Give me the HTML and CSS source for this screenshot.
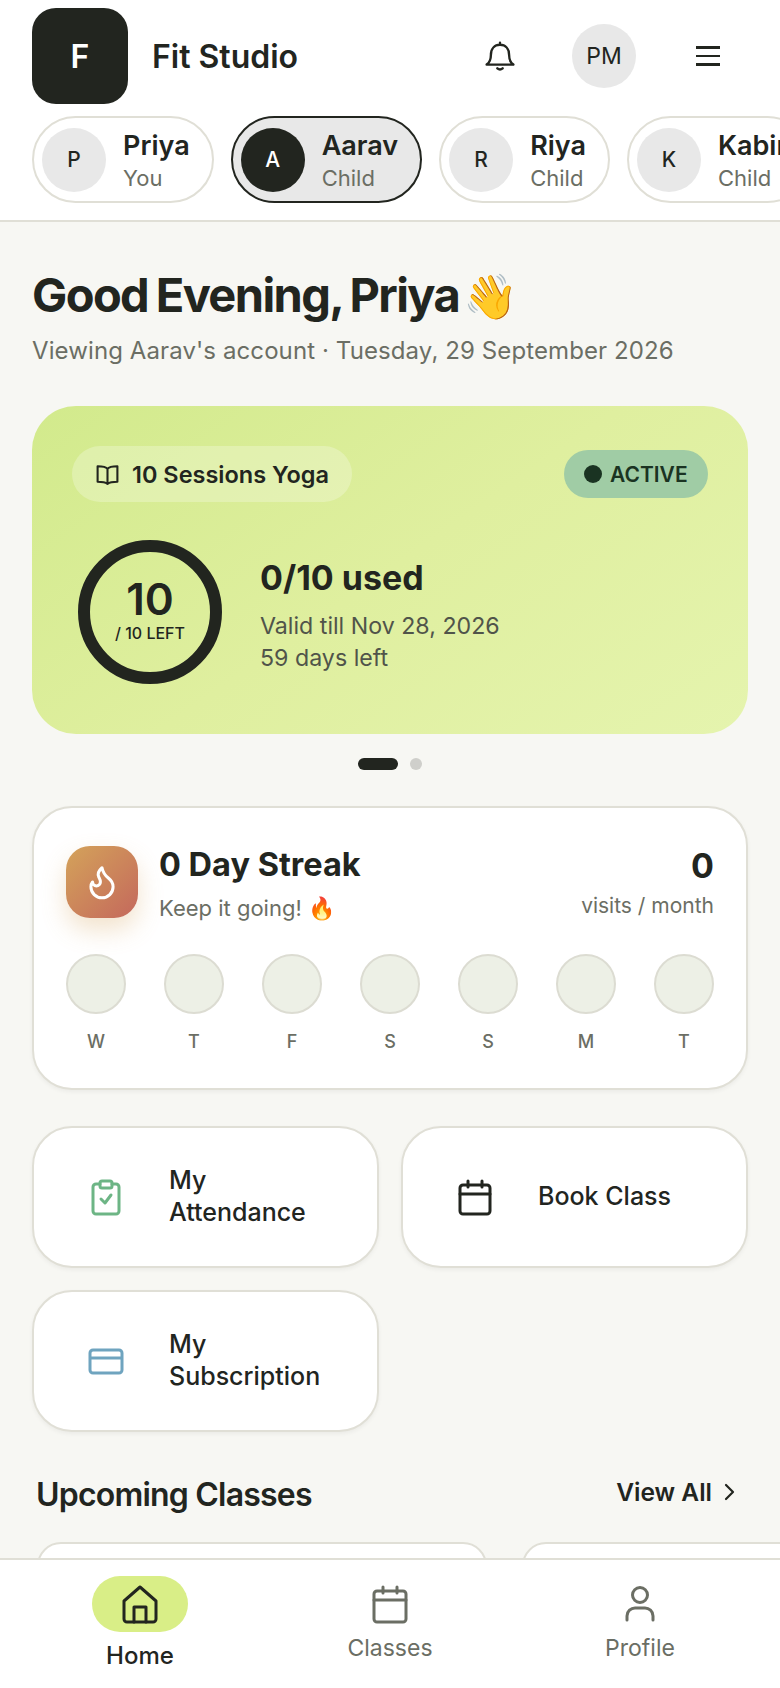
FILE: index.html
```html
<!DOCTYPE html>
<html lang="en">
<head>
  <meta charset="UTF-8">
  <meta name="viewport" content="width=device-width, initial-scale=1.0">
  <title>Fit Studio</title>
  <link rel="stylesheet" href="styles.css">
</head>
<body>
  <header class="topbar">
    <div class="brand-row">
      <div class="logo">F</div>
      <div class="brand-name">Fit Studio</div>
      <svg class="bell" viewBox="0 0 28 28" fill="none" stroke="#22251f" stroke-width="2.2" stroke-linecap="round" stroke-linejoin="round">
        <path d="M14 1.5v2M5.5 13c0-6 3.5-9.500 8.500-9.500s8.500 3.500 8.500 9.500c0 5 1 7 4 9H1.500c3-2 4-4 4-9z"/>
        <path d="M11.500 25.500c1.500 1.300 3.500 1.300 5 0"/>
      </svg>
      <div class="user-badge">PM</div>
      <div class="burger"><span></span><span></span><span></span></div>
    </div>

    <!-- Member switcher -->
    <div class="chips">
      <div class="chip">
        <div class="chip-avatar">P</div>
        <div class="chip-text"><div class="chip-name">Priya</div><div class="chip-role">You</div></div>
      </div>
      <div class="chip chip-active">
        <div class="chip-avatar">A</div>
        <div class="chip-text"><div class="chip-name">Aarav</div><div class="chip-role">Child</div></div>
      </div>
      <div class="chip">
        <div class="chip-avatar">R</div>
        <div class="chip-text"><div class="chip-name">Riya</div><div class="chip-role">Child</div></div>
      </div>
      <div class="chip">
        <div class="chip-avatar">K</div>
        <div class="chip-text"><div class="chip-name">Kabir</div><div class="chip-role">Child</div></div>
      </div>
    </div>
  </header>

  <main class="content">
    <h1 class="greeting">Good Evening, Priya <span class="emoji wave">👋</span></h1>
    <p class="subline">Viewing Aarav's account · Tuesday, 29 September 2026</p>

    <!-- Plan card -->
    <section class="plan-card">
      <div class="plan-top">
        <div class="plan-pill">
          <svg class="icon-book" viewBox="0 0 24 24" fill="none" stroke="#22251f" stroke-width="2" stroke-linejoin="round" stroke-linecap="round">
            <path d="M12 6.500C10.500 4.500 7 4 2.500 4v15c4.500 0 7.500.5 9.500 2 2-1.500 5-2 9.500-2V4C17 4 13.500 4.500 12 6.500zM12 6.500V21"/>
          </svg>
          10 Sessions Yoga
        </div>
        <div class="status"><span class="status-dot"></span>ACTIVE</div>
      </div>
      <div class="plan-body">
        <div class="ring">
          <div class="ring-num">10</div>
          <div class="ring-label">/ 10 LEFT</div>
        </div>
        <div class="plan-info">
          <div class="plan-used">0/10 used</div>
          <div class="plan-meta">Valid till Nov 28, 2026</div>
          <div class="plan-meta">59 days left</div>
        </div>
      </div>
    </section>

    <div class="pager"><span class="pager-on"></span><span class="pager-off"></span></div>

    <!-- Streak -->
    <section class="streak-card">
      <div class="streak-top">
        <div class="streak-icon">
          <svg viewBox="0 0 24 24" width="38" height="38" fill="none" stroke="#fff" stroke-width="1.900" stroke-linecap="round" stroke-linejoin="round">
            <path d="M8.500 14.500A2.500 2.500 0 0 0 11 12c0-1.380-.5-2-1-3-1.072-2.143-.224-4.054 2-6 .5 2.500 2 4.900 4 6.500 2 1.600 3 3.500 3 5.500a7 7 0 1 1-14 0c0-1.153.433-2.294 1-3a2.500 2.500 0 0 0 2.500 2.500z"/>
          </svg>
        </div>
        <div class="streak-text">
          <div class="streak-title">0 Day Streak</div>
          <div class="streak-sub">Keep it going! <span class="emoji">🔥</span></div>
        </div>
        <div class="streak-count">
          <div class="streak-num">0</div>
          <div class="streak-unit">visits / month</div>
        </div>
      </div>
      <div class="week">
        <div class="day"><span class="day-dot"></span>W</div>
        <div class="day"><span class="day-dot"></span>T</div>
        <div class="day"><span class="day-dot"></span>F</div>
        <div class="day"><span class="day-dot"></span>S</div>
        <div class="day"><span class="day-dot"></span>S</div>
        <div class="day"><span class="day-dot"></span>M</div>
        <div class="day"><span class="day-dot"></span>T</div>
      </div>
    </section>

    <!-- Quick actions -->
    <section class="actions">
      <div class="action">
        <div class="action-icon">
          <svg width="30" height="37" viewBox="0 0 30 37" fill="none" stroke="#6db585" stroke-width="3" stroke-linecap="round" stroke-linejoin="round">
            <path d="M9 5H5a3 3 0 0 0-3 3v24a3 3 0 0 0 3 3h20a3 3 0 0 0 3-3V8a3 3 0 0 0-3-3h-4"/>
            <rect x="9" y="2" width="12" height="7" rx="2"/>
            <path d="M10 20l4 4 6-8"/>
          </svg>
        </div>
        <div class="action-label">My<br>Attendance</div>
      </div>
      <div class="action">
        <div class="action-icon">
          <svg width="34" height="37" viewBox="0 0 34 37" fill="none" stroke="#22251f" stroke-width="3" stroke-linecap="round" stroke-linejoin="round">
            <rect x="2" y="6" width="30" height="29" rx="3"/>
            <path d="M2 15h30M10 2v6M24 2v6"/>
          </svg>
        </div>
        <div class="action-label">Book Class</div>
      </div>
      <div class="action">
        <div class="action-icon">
          <svg width="36" height="27" viewBox="0 0 36 27" fill="none" stroke="#6fa4bf" stroke-width="3" stroke-linejoin="round">
            <rect x="2" y="2" width="32" height="23" rx="3"/>
            <path d="M2 10h32"/>
          </svg>
        </div>
        <div class="action-label">My<br>Subscription</div>
      </div>
    </section>

    <div class="section-head">
      <h2 class="section-title">Upcoming Classes</h2>
      <div class="view-all">View All
        <svg width="12" height="18" viewBox="0 0 12 18" fill="none" stroke="#22251f" stroke-width="2.200" stroke-linecap="round" stroke-linejoin="round"><path d="M2 2l7 7-7 7"/></svg>
      </div>
    </div>

    <div class="class-row">
      <div class="class-card"></div>
      <div class="class-card"></div>
    </div>
  </main>

  <nav class="bottom-nav">
    <div class="nav-item nav-active">
      <div class="nav-pill">
        <svg width="38" height="40" viewBox="0 0 38 40" fill="none" stroke="#22251f" stroke-width="3" stroke-linecap="round" stroke-linejoin="round">
          <path d="M19 3 3 17v18a3 3 0 0 0 3 3h26a3 3 0 0 0 3-3V17z"/>
          <path d="M13 38V23h12v15"/>
        </svg>
      </div>
      Home
    </div>
    <div class="nav-item">
      <div class="nav-pill">
        <svg width="36" height="40" viewBox="0 0 36 40" fill="none" stroke="#6b6e64" stroke-width="3" stroke-linecap="round" stroke-linejoin="round">
          <rect x="2" y="7" width="32" height="31" rx="3"/>
          <path d="M2 16h32M11 3v6M25 3v6"/>
        </svg>
      </div>
      Classes
    </div>
    <div class="nav-item">
      <div class="nav-pill">
        <svg width="32" height="38" viewBox="0 0 32 38" fill="none" stroke="#6b6e64" stroke-width="3" stroke-linecap="round" stroke-linejoin="round">
          <circle cx="16" cy="10" r="7.500"/>
          <path d="M3 35v-4c0-5 4-8 8-8h10c4 0 8 3 8 8v4"/>
        </svg>
      </div>
      Profile
    </div>
  </nav>
</body>
</html>
```

FILE: styles.css
```css
* {
  box-sizing: border-box;
}
html, body {
  height: 100%;
}
body {
  margin: 0;
  overflow: hidden;
  background: #f7f7f3;
  color: #22251f;
  font-family: Inter, "Noto Sans", sans-serif;
}

/* Header */
.topbar {
  background: #fff;
  border-bottom: 2px solid #e0dfd6;
  padding: 8px 0 17px 32px;
  height: 222px;
}
.brand-row {
  display: flex;
  align-items: center;
  height: 96px;
  padding-right: 60px;
}
.logo {
  width: 96px;
  height: 96px;
  border-radius: 24px;
  background: #22251f;
  color: #fff;
  display: flex;
  align-items: center;
  justify-content: center;
  font-size: 32px;
  font-weight: 600;
}
.brand-name {
  margin-left: 24px;
  font-size: 32px;
  font-weight: 600;
  flex: 1;
}
.bell {
  width: 30px;
  height: 30px;
  margin-right: -1px;
}
.user-badge {
  width: 64px;
  height: 64px;
  border-radius: 50%;
  background: #e8e8e8;
  margin-left: 58px;
  display: flex;
  align-items: center;
  justify-content: center;
  font-size: 23px;
}
.burger {
  margin-left: 60px;
  width: 24px;
  display: flex;
  flex-direction: column;
  gap: 6px;
}
.burger span {
  height: 2.500px;
  background: #22251f;
}

.chips {
  display: flex;
  gap: 17px;
  margin-top: 12px;
}
.chip {
  flex: none;
  height: 87px;
  border: 2px solid #e0dfd6;
  border-radius: 44px;
  padding: 0 22px 0 8px;
  display: flex;
  align-items: center;
  gap: 17px;
}
.chip-active {
  background: #e8e8e8;
  border-color: #22251f;
}
.chip-avatar {
  width: 64px;
  height: 64px;
  border-radius: 50%;
  background: #e8e8e8;
  display: flex;
  align-items: center;
  justify-content: center;
  font-size: 21px;
  font-weight: 500;
}
.chip-active .chip-avatar {
  background: #22251f;
  color: #fff;
}
.chip-text {
  padding-top: 4px;
}
.chip-name {
  font-size: 27px;
  font-weight: 600;
  line-height: 32px;
}
.chip-role {
  font-size: 22px;
  line-height: 32px;
  color: #6b6e64;
}

/* Main */
.content {
  padding: 0 32px;
}
.greeting {
  margin: 45px 0 0;
  font-size: 47px;
  font-weight: 700;
  line-height: 56px;
  letter-spacing: -1.600px;
  word-spacing: -2px;
}
.emoji {
  font-family: "Noto Color Emoji", sans-serif;
  letter-spacing: 0;
}
.wave {
  font-size: 44px;
  margin-left: -3px;
}
.subline {
  margin: 9px 0 0;
  font-size: 24px;
  line-height: 34px;
  letter-spacing: 0.1px;
  color: #6b6e64;
}

.plan-card {
  margin-top: 38px;
  height: 328px;
  border-radius: 44px;
  background: linear-gradient(145deg, #d2ea8c 0%, #dfef9f 50%, #e5f4ae 100%);
  padding: 40px;
}
.plan-top {
  display: flex;
  align-items: center;
  justify-content: space-between;
}
.plan-pill {
  height: 56px;
  width: 280px;
  border-radius: 28px;
  background: rgba(255, 255, 255, 0.25);
  display: flex;
  align-items: center;
  gap: 12px;
  padding-left: 23px;
  font-size: 23.500px;
  font-weight: 600;
}
.icon-book {
  width: 25px;
  height: 25px;
}
.status {
  height: 48px;
  width: 144px;
  border-radius: 24px;
  background: #a0cca5;
  color: #1a3322;
  display: flex;
  align-items: center;
  gap: 8px;
  padding-left: 20px;
  font-size: 21px;
  font-weight: 600;
}
.status-dot {
  width: 18px;
  height: 18px;
  border-radius: 50%;
  background: #1a3322;
}
.plan-body {
  display: flex;
  align-items: center;
  gap: 38px;
  margin: 38px 0 0 6px;
}
.ring {
  width: 144px;
  height: 144px;
  border: 12px solid #22251f;
  border-radius: 50%;
  padding-bottom: 3px;
  display: flex;
  flex-direction: column;
  align-items: center;
  justify-content: center;
}
.ring-num {
  font-size: 44px;
  font-weight: 600;
  line-height: 45px;
}
.ring-label {
  font-size: 16px;
  font-weight: 500;
  line-height: 22px;
}
.plan-info {
  padding-top: 7px;
}
.plan-used {
  font-size: 34px;
  font-weight: 700;
  line-height: 42px;
  margin-bottom: 11px;
}
.plan-meta {
  font-size: 23.200px;
  line-height: 32px;
  color: #50544a;
}

.pager {
  display: flex;
  justify-content: center;
  gap: 12px;
  margin-top: 24px;
}
.pager-on {
  width: 40px;
  height: 12px;
  border-radius: 6px;
  background: #22251f;
}
.pager-off {
  width: 12px;
  height: 12px;
  border-radius: 50%;
  background: #cfcfcb;
}

.streak-card {
  margin-top: 36px;
  height: 284px;
  background: #fff;
  border: 2px solid #e0dfd6;
  border-radius: 40px;
  box-shadow: 0 2px 4px rgba(0, 0, 0, 0.05);
  padding: 38px 32px 0;
}
.streak-top {
  display: flex;
}
.streak-icon {
  width: 72px;
  height: 72px;
  border-radius: 24px;
  background: linear-gradient(135deg, #d4a35a, #c4685c);
  box-shadow: 0 12px 24px rgba(212, 163, 90, 0.3);
  display: flex;
  align-items: center;
  justify-content: center;
}
.streak-text {
  margin-left: 21px;
  flex: 1;
}
.streak-title {
  font-size: 32.500px;
  font-weight: 700;
  line-height: 38px;
}
.streak-sub {
  font-size: 22px;
  line-height: 34px;
  margin-top: 7px;
  color: #6b6e64;
}
.streak-count {
  text-align: right;
}
.streak-num {
  font-size: 34px;
  font-weight: 700;
  line-height: 40px;
}
.streak-unit {
  font-size: 21px;
  line-height: 32px;
  margin-top: 4px;
  color: #6b6e64;
}
.week {
  display: flex;
  justify-content: space-between;
  margin-top: 28px;
}
.day {
  display: flex;
  flex-direction: column;
  align-items: center;
  gap: 17px;
  width: 60px;
  font-size: 18px;
  font-weight: 500;
  line-height: 22px;
  color: #6b6e64;
}
.day-dot {
  width: 60px;
  height: 60px;
  border-radius: 50%;
  background: #edf0e6;
  border: 2px solid #dcdcd2;
}

.actions {
  display: grid;
  grid-template-columns: 1fr 1fr;
  gap: 22px;
  margin-top: 36px;
}
.action {
  height: 142px;
  background: #fff;
  border: 2px solid #e0dfd6;
  border-radius: 40px;
  box-shadow: 0 2px 4px rgba(0, 0, 0, 0.05);
  display: flex;
  align-items: center;
  padding-left: 33px;
}
.action-icon {
  width: 78px;
  display: flex;
  justify-content: center;
  margin-right: 24px;
}
.action-label {
  font-size: 25px;
  font-weight: 500;
  line-height: 32px;
  padding-bottom: 3px;
}

.section-head {
  display: flex;
  align-items: center;
  justify-content: space-between;
  margin: 43px 12px 0 4px;
}
.section-title {
  margin: 0;
  font-size: 32px;
  font-weight: 600;
  line-height: 40px;
  letter-spacing: -0.800px;
}
.view-all {
  display: flex;
  align-items: center;
  gap: 12px;
  font-size: 24.500px;
  font-weight: 600;
  padding-bottom: 6px;
}
.class-row {
  display: flex;
  gap: 35px;
  margin: 27px 0 0 5px;
}
.class-card {
  flex: none;
  width: 450px;
  height: 120px;
  background: #fff;
  border: 2px solid #e0dfd6;
  border-radius: 24px;
}

.bottom-nav {
  position: fixed;
  left: 0;
  right: 0;
  bottom: 0;
  height: 130px;
  background: #fff;
  border-top: 2px solid #e0dfd6;
  display: grid;
  grid-template-columns: 280px 220px 280px;
  padding-top: 16px;
}
.nav-item {
  display: flex;
  flex-direction: column;
  align-items: center;
  font-size: 23px;
  line-height: 32px;
  color: #6b6e64;
}
.nav-pill {
  width: 96px;
  height: 56px;
  border-radius: 28px;
  display: flex;
  align-items: center;
  justify-content: center;
}
.nav-active {
  color: #22251f;
  font-size: 24px;
  font-weight: 500;
}
.nav-active .nav-pill {
  background: #d9ee87;
  margin-bottom: 8px;
}
```
